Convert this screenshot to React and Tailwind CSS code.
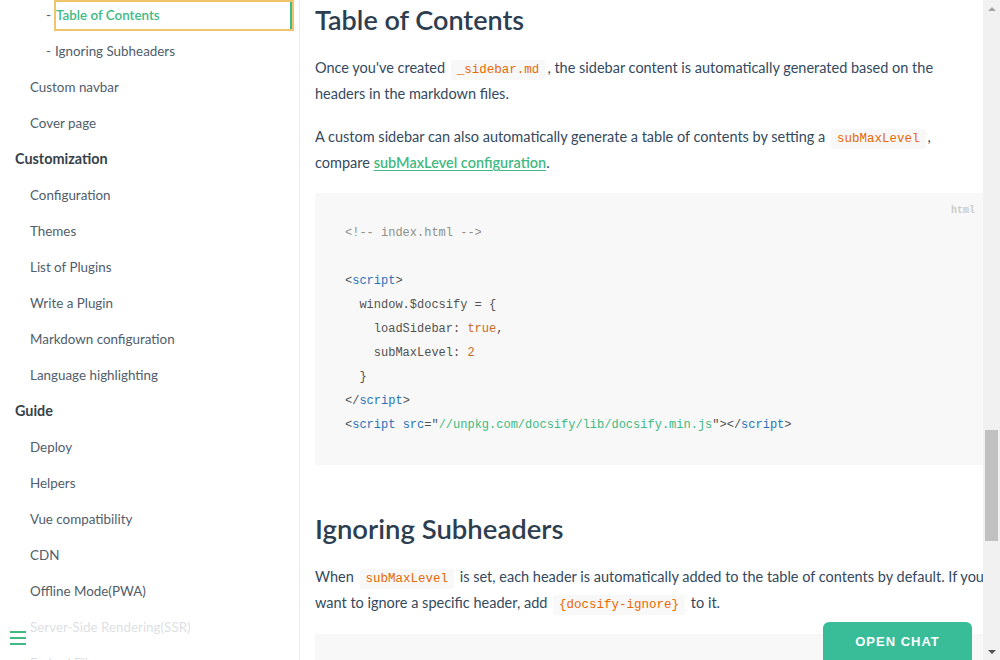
import React from 'react';

const sans = { fontFamily: 'Lato, "Noto Sans", sans-serif' };

const sidebar = [
  { label: 'Table of Contents', level: 2, active: true },
  { label: 'Ignoring Subheaders', level: 2 },
  { label: 'Custom navbar', level: 1 },
  { label: 'Cover page', level: 1 },
  { label: 'Customization', level: 0 },
  { label: 'Configuration', level: 1 },
  { label: 'Themes', level: 1 },
  { label: 'List of Plugins', level: 1 },
  { label: 'Write a Plugin', level: 1 },
  { label: 'Markdown configuration', level: 1 },
  { label: 'Language highlighting', level: 1 },
  { label: 'Guide', level: 0 },
  { label: 'Deploy', level: 1 },
  { label: 'Helpers', level: 1 },
  { label: 'Vue compatibility', level: 1 },
  { label: 'CDN', level: 1 },
  { label: 'Offline Mode(PWA)', level: 1 },
  { label: 'Server-Side Rendering(SSR)', level: 1 },
  { label: 'Embed Files', level: 1 },
];

const Code = ({ children }) => (
  <code className="mx-[2px] rounded-[2px] bg-[#f8f8f8] px-[6px] py-[3px] font-['Liberation_Mono',monospace] text-[12.5px] leading-[1] text-[#e96900]">
    {children}
  </code>
);

const SidebarItem = ({ item }) => {
  if (item.level === 0) {
    return (
      <div className="flex h-[36px] items-center pl-[15px] text-[14.4px] font-bold text-[#364149]">
        {item.label}
      </div>
    );
  }
  if (item.level === 1) {
    return (
      <div className="flex h-[36px] items-center pl-[30px] text-[13.4px] text-[#505d6b]">
        {item.label}
      </div>
    );
  }
  return (
    <div className="flex h-[36px] items-center pl-[46px] text-[13.4px] text-[#505d6b]">
      <span className={item.active ? 'mr-[5px]' : 'mr-[4px]'}>-</span>
      {item.active ? (
        <span className="flex h-[27px] flex-1 items-center border-r-2 border-[#42b983] font-semibold text-[#42b983] outline-2 outline-[#f0c36d]">
          {item.label}
        </span>
      ) : (
        <span>{item.label}</span>
      )}
    </div>
  );
};

const P = ({ lines, className = '' }) => (
  <p className={'text-[14.5px] leading-[26px] text-[#34495e] ' + className}>
    {lines.map((l, i) => (
      <span key={i} className="block h-[26px] whitespace-nowrap">
        {l}
      </span>
    ))}
  </p>
);

const C = {
  p: 'text-[#525252]',
  t: 'text-[#2973b7]',
  s: 'text-[#42b983]',
  n: 'text-[#c76b29]',
  c: 'text-[#8e908c]',
};

export default function App() {
  return (
    <div className="flex h-[660px] w-[1000px] overflow-hidden bg-white" style={sans}>
      {/* Sidebar */}
      <aside className="relative h-full w-[300px] shrink-0 overflow-hidden border-r border-[#ededed]">
        <div className="-mt-[3px] pr-[7px]">
          {sidebar.map((item) => (
            <SidebarItem key={item.label} item={item} />
          ))}
        </div>
        <div className="absolute bottom-0 left-0 h-[50px] w-[284px] bg-white/80">
          <div className="absolute left-[10px] top-[21px] flex flex-col gap-[4px]">
            <span className="block h-[2px] w-[16px] bg-[#42b983]" />
            <span className="block h-[2px] w-[16px] bg-[#42b983]" />
            <span className="block h-[2px] w-[16px] bg-[#42b983]" />
          </div>
        </div>
      </aside>

      {/* Content */}
      <main className="relative h-full min-w-0 flex-1 overflow-hidden pl-[15px]">
        <h2 className="h-[40px] text-[27px] font-semibold leading-[40px] text-[#2c3e50]">
          Table of Contents
        </h2>
        <P
          className="mt-[15px]"
          lines={[
            <>Once you've created <Code>_sidebar.md</Code>, the sidebar content is automatically generated based on the</>,
            'headers in the markdown files.',
          ]}
        />
        <P
          className="mt-[17px]"
          lines={[
            <>A custom sidebar can also automatically generate a table of contents by setting a <Code>subMaxLevel</Code>,</>,
            <>
              compare{' '}
              <a className="font-semibold text-[#42b983] underline underline-offset-2">subMaxLevel configuration</a>.
            </>,
          ]}
        />

        <div className="relative mt-[17px] bg-[#f8f8f8] pb-[28px] pl-[30px] pt-[28px] font-['Liberation_Mono',monospace] text-[12px] leading-[24px] text-[#525252]">
          <span className="absolute right-[8px] top-[6px] text-[10px] font-bold text-[#ccc]">html</span>
          <pre className="font-['Liberation_Mono',monospace]">
            <div className={C.c}>&lt;!-- index.html --&gt;</div>
            <div>&nbsp;</div>
            <div>
              <span className={C.p}>&lt;</span><span className={C.t}>script</span><span className={C.p}>&gt;</span>
            </div>
            <div>  window.$docsify = {'{'}</div>
            <div>
              {'    loadSidebar: '}<span className={C.n}>true</span>,
            </div>
            <div>
              {'    subMaxLevel: '}<span className={C.n}>2</span>
            </div>
            <div>  {'}'}</div>
            <div>
              <span className={C.p}>&lt;/</span><span className={C.t}>script</span><span className={C.p}>&gt;</span>
            </div>
            <div>
              <span className={C.p}>&lt;</span><span className={C.t}>script</span> <span className={C.t}>src</span>
              <span className={C.p}>="</span><span className={C.s}>//unpkg.com/docsify/lib/docsify.min.js</span>
              <span className={C.p}>"&gt;&lt;/</span><span className={C.t}>script</span><span className={C.p}>&gt;</span>
            </div>
          </pre>
        </div>

        <h2 className="mt-[44px] h-[40px] text-[27.5px] font-semibold leading-[40px] text-[#2c3e50]">
          Ignoring Subheaders
        </h2>
        <P
          className="mt-[15px]"
          lines={[
            <>When <Code>subMaxLevel</Code> is set, each header is automatically added to the table of contents by default. If you</>,
            <>want to ignore a specific header, add <Code>{'{docsify-ignore}'}</Code> to it.</>,
          ]}
        />
        <div className="mt-[18px] h-[60px] bg-[#f8f8f8]" />

        <button className="absolute bottom-[-10px] right-[11px] flex h-[48px] w-[149px] items-start justify-center rounded-t-[6px] bg-[#38bd98] pt-[10px] text-[13px] font-bold tracking-[1px] text-white" style={{ fontFamily: '"Liberation Sans", Arial, sans-serif' }}>
          OPEN CHAT
        </button>
      </main>

      {/* Scrollbar */}
      <div className="flex h-full w-[17px] shrink-0 flex-col items-center bg-[#f1f1f1]">
        <div className="flex h-[17px] items-center justify-center">
          <span className="block h-0 w-0 border-x-[4px] border-b-[4px] border-x-transparent border-b-[#a3a3a3]" />
        </div>
        <div className="mt-[413px] h-[111px] w-[13px] bg-[#c1c1c1]" />
        <div className="flex-1" />
        <div className="flex h-[17px] items-center justify-center">
          <span className="block h-0 w-0 border-x-[4px] border-t-[4px] border-x-transparent border-t-[#505050]" />
        </div>
      </div>
    </div>
  );
}
